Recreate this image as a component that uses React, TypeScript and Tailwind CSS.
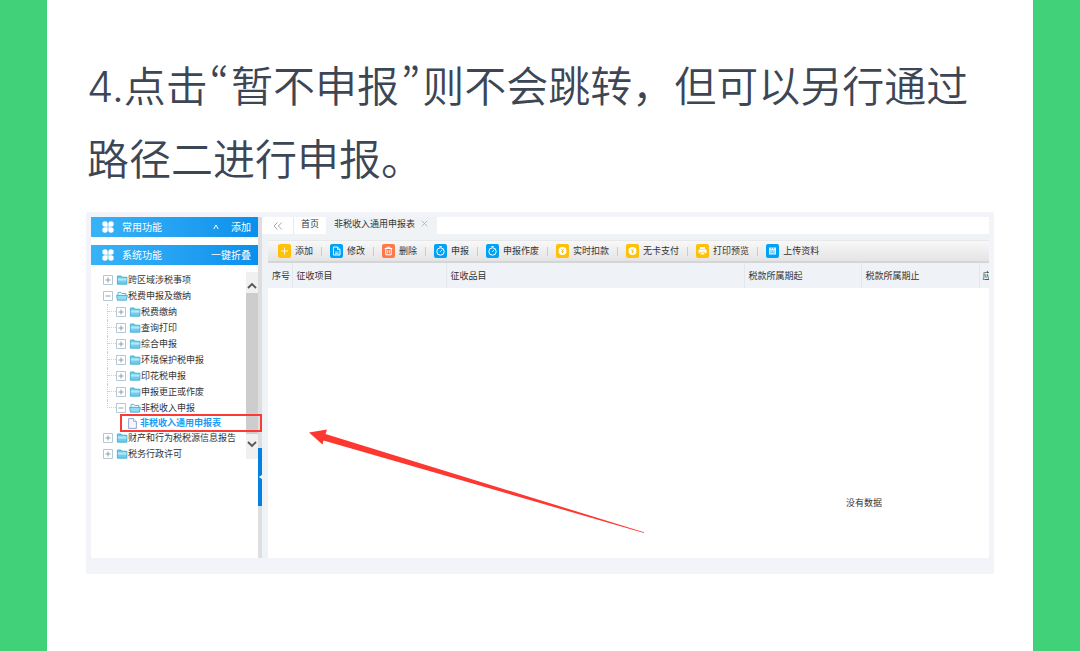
import React from "react";

type IconKind = "plus" | "edit" | "trash" | "clock" | "coin" | "printer" | "save";

function ToolGlyph({ kind }: { kind: IconKind }) {
  return (
    <svg viewBox="0 0 13 14" className="h-[14px] w-[13px]" fill="none" stroke="#fff" strokeWidth="1" aria-hidden="true">
      {kind === "plus" && <path d="M6.5 3.5v7M3 7h7" strokeOpacity="0.85" />}
      {kind === "edit" && (
        <>
          <path d="M3.5 3h4l2.5 2.5V11H3.5z" />
          <path d="M7.5 3v2.5H10M5 8h3.5M5 9.6h3.5" strokeWidth="0.8" />
        </>
      )}
      {kind === "trash" && (
        <>
          <path d="M2.8 4.5h7.4M5 4.3V3.2h3v1.1M3.8 4.8v6h5.4v-6" />
          <path d="M5.6 6.2v3M7.4 6.2v3" strokeWidth="0.8" />
        </>
      )}
      {kind === "clock" && (
        <>
          <circle cx="6.5" cy="7.5" r="3.7" />
          <path d="M6.3 7.8l1.9-2.1M5.2 2.7h2.6" />
        </>
      )}
      {kind === "coin" && (
        <>
          <circle cx="6.5" cy="7" r="4" fill="#fff" stroke="none" />
          <path d="M5.2 5l1.3 1.6L7.8 5M6.5 6.6v2.6M5.3 7.5h2.4" stroke="#ffc107" strokeWidth="0.9" />
        </>
      )}
      {kind === "printer" && (
        <>
          <path d="M4 3h5v2H4zM2.5 5.6h8v3.6h-8z" fill="#fff" stroke="none" />
          <path d="M4.3 8.2h4.4v2.6H4.3z" fill="#fff" stroke="#ffc107" strokeWidth="0.7" />
        </>
      )}
      {kind === "save" && (
        <>
          <path d="M3 3.5h7v7H3z" fill="#fff" fillOpacity="0.9" stroke="none" />
          <path d="M4.2 7h4.6M4.2 8.8h4.6M5.2 3.5v1.8M7.6 3.5v1.8" stroke="#00a2f5" strokeWidth="0.7" />
        </>
      )}
    </svg>
  );
}

const tools: { label: string; kind: IconKind; color: string }[] = [
  { label: "添加", kind: "plus", color: "bg-[#ffc107]" },
  { label: "修改", kind: "edit", color: "bg-[#00a2f5]" },
  { label: "删除", kind: "trash", color: "bg-[#ff7848]" },
  { label: "申报", kind: "clock", color: "bg-[#00a2f5]" },
  { label: "申报作废", kind: "clock", color: "bg-[#00a2f5]" },
  { label: "实时扣款", kind: "coin", color: "bg-[#ffc107]" },
  { label: "无卡支付", kind: "coin", color: "bg-[#ffc107]" },
  { label: "打印预览", kind: "printer", color: "bg-[#ffc107]" },
  { label: "上传资料", kind: "save", color: "bg-[#00a2f5]" },
];

function Folder({ open = false }: { open?: boolean }) {
  return (
    <svg viewBox="0 0 12 10" className="h-[10px] w-3 shrink-0" aria-hidden="true">
      {open ? (
        <>
          <path d="M2 5V1.4h3l.9 1.1h4V5" fill="#eefaff" stroke="#45a9cd" strokeWidth="0.8" />
          <path d="M.6 4.4h10.8l-1 4.8H1.4z" fill="#8fdcf3" stroke="#3aa3ca" strokeWidth="0.8" />
        </>
      ) : (
        <>
          <path d="M1.4 9.2V1h3.6l.9 1.2h5v7z" fill="#6ccdec" stroke="#3aa3ca" strokeWidth="0.8" />
          <path d="M1.9 3.4h8.6v2.2H1.9z" fill="#b5e9f8" />
        </>
      )}
    </svg>
  );
}

function Toggle({ open = false, label }: { open?: boolean; label: string }) {
  return (
    <button type="button" aria-label={label} aria-expanded={open} className="h-[10px] w-[10px] shrink-0">
      <svg viewBox="0 0 10 10" className="h-[10px] w-[10px]" fill="none" aria-hidden="true">
        <path d="M.5.5h9v9h-9z" stroke="#b4c8d2" fill="#fff" />
        <path d={open ? "M2.5 5h5" : "M2.5 5h5M5 2.5v5"} stroke="#8796a0" strokeWidth="0.9" />
      </svg>
    </button>
  );
}

function Branch({ label, open = false }: { label: string; open?: boolean }) {
  return (
    <div className="flex h-4 items-center">
      <Toggle open={open} label={label} />
      <span className="ml-[3px] flex items-center">
        <Folder open={open} />
        {label}
      </span>
    </div>
  );
}

const children = ["税费缴纳", "查询打印", "综合申报", "环境保护税申报", "印花税申报", "申报更正或作废"];

function BarHeader({ title, action, caret = false }: { title: string; action: string; caret?: boolean }) {
  return (
    <div className="flex h-5 items-center bg-linear-to-r from-[#38b3f8] to-[#0790ec] pr-[7px] pb-px pl-[11px] text-[10px] text-white">
      <svg viewBox="0 0 12 12" className="h-3 w-3" fill="#fff" aria-hidden="true">
        <path d="M3 0.3a2.7 2.7 0 0 1 2.7 2.7v2.7H3A2.7 2.7 0 0 1 3 .3zM9 .3a2.7 2.7 0 0 1 0 5.4H6.3V3A2.7 2.7 0 0 1 9 .3zM3 6.3h2.7V9A2.7 2.7 0 1 1 3 6.3zM6.3 6.3H9A2.7 2.7 0 1 1 6.3 9z" />
      </svg>
      <h2 className="ml-2">{title}</h2>
      <button type="button" className="ml-auto flex items-center gap-3">
        {caret && (
          <svg viewBox="0 0 6 6" className="h-[6px] w-[6px]" fill="none" stroke="#fff" aria-hidden="true">
            <path d="M0.8 5L3 1l2.2 4" />
          </svg>
        )}
        {action}
      </button>
    </div>
  );
}

function Sidebar() {
  return (
    <aside className="flex w-[167px] shrink-0 flex-col bg-white">
      <BarHeader title="常用功能" action="添加" caret />
      <div className="h-2" />
      <BarHeader title="系统功能" action="一键折叠" />
      <div className="mt-[7px] flex">
        <nav className="min-w-0 flex-1 pl-3 text-[9px] leading-4 whitespace-nowrap text-[#333]">
          <Branch label="跨区域涉税事项" />
          <Branch label="税费申报及缴纳" open />
          <ul className="ml-1">
            {children.map((name) => (
              <li key={name} className="flex">
                <span className="h-4 w-[9px] border-l border-dotted border-[#c9d1d6]">
                  <span className="block h-2 border-b border-dotted border-[#c9d1d6]" />
                </span>
                <Branch label={name} />
              </li>
            ))}
            <li className="flex">
              <span className="h-2 w-[9px] border-b border-l border-dotted border-[#c9d1d6]" />
              <Branch label="非税收入申报" open />
            </li>
            <li className="relative flex h-[14px] items-center pl-[21px]">
              <span className="absolute top-[-2px] left-[13px] h-[18px] w-[142px] border-2 border-[#fb3a35]" />
              <svg viewBox="0 0 9 11" className="h-[11px] w-[9px]" aria-hidden="true">
                <path d="M.6.6h5l2.8 2.8v7H.6z" fill="#f4f7ff" stroke="#7c8fc4" strokeWidth="0.8" />
                <path d="M5.6.6v2.8h2.8" fill="#fff" stroke="#7c8fc4" strokeWidth="0.7" />
              </svg>
              <a href="#general" className="ml-[3px] font-bold text-[#1c9cf6]">
                非税收入通用申报表
              </a>
            </li>
          </ul>
          <Branch label="财产和行为税税源信息报告" />
          <Branch label="税务行政许可" />
        </nav>
        <div className="mb-[3px] flex w-3 shrink-0 flex-col items-center bg-[#f0f0f0]">
          <svg viewBox="0 0 12 21" className="h-[21px] w-3" fill="none" stroke="#555" strokeWidth="1.8" aria-hidden="true">
            <path d="M2 16l4-4 4 4" />
          </svg>
          <div className="w-full flex-1 bg-[#cdcdcd]" />
          <svg viewBox="0 0 12 25" className="h-[25px] w-3" fill="none" stroke="#555" strokeWidth="1.8" aria-hidden="true">
            <path d="M2 8l4 4 4-4" />
          </svg>
        </div>
      </div>
    </aside>
  );
}

function Workspace() {
  return (
    <main className="relative flex min-w-0 flex-1 flex-col text-[9px] text-[#333]">
      <div className="flex h-[17px] bg-white">
        <button type="button" aria-label="收起" className="flex w-8 items-center justify-center border-r border-[#e6eaee]">
          <svg viewBox="0 0 10 8" className="h-2 w-[10px]" fill="none" stroke="#8b9299" strokeWidth="0.8" aria-hidden="true">
            <path d="M4.5 .5L1 4l3.5 3.5M8.8 .5L5.3 4l3.5 3.5" />
          </svg>
        </button>
        <button type="button" className="w-8 pb-1">首页</button>
        <div className="flex items-center gap-[6px] bg-[#eff3f6] pr-[9px] pb-1 pl-2">
          <button type="button">非税收入通用申报表</button>
          <button type="button" aria-label="关闭">
            <svg viewBox="0 0 7 7" className="h-[7px] w-[7px]" stroke="#a3a9ae" strokeWidth="0.8" aria-hidden="true">
              <path d="M.7.7l5.6 5.6M6.3.7L.7 6.3" />
            </svg>
          </button>
        </div>
      </div>
      <div className="ml-[6px] flex flex-1 flex-col pt-[6px]">
        <div className="flex h-[23px] items-center border-t border-b-2 border-t-[#e6e8ea] border-b-[#d3d5d7] bg-linear-to-b from-[#f8f8f8] to-[#e4e4e5] pl-[10px]">
          {tools.map((tool, i) => (
            <React.Fragment key={tool.label}>
              {i > 0 && <span className="mx-2 h-[9px] w-px bg-[#c9cbcd]" />}
              <button type="button" className="flex items-center gap-1 whitespace-nowrap">
                <span className={`rounded-xs ${tool.color}`}>
                  <ToolGlyph kind={tool.kind} />
                </span>
                {tool.label}
              </button>
            </React.Fragment>
          ))}
        </div>
        <table className="w-full table-fixed text-left">
          <thead>
            <tr className="h-[25px] bg-[#eff2f6] [&>th]:overflow-hidden [&>th]:border-r [&>th]:border-[#e4e8ec] [&>th]:pl-1 [&>th]:font-normal [&>th]:whitespace-nowrap [&>th:last-child]:border-r-0 [&>th:last-child]:pl-[3px]">
              <th className="w-[24px]">序号</th>
              <th className="w-[154px]">征收项目</th>
              <th className="w-[298px]">征收品目</th>
              <th className="w-[117px]">税款所属期起</th>
              <th className="w-[118px]">税款所属期止</th>
              <th>应</th>
            </tr>
          </thead>
        </table>
        <p className="flex flex-1 justify-end bg-white pt-52 pr-[107px]">没有数据</p>
      </div>
      <svg viewBox="0 0 336 106" className="absolute top-[211px] left-[46px] h-[106px] w-[336px]" aria-hidden="true">
        <path d="M1 4.5L19 1.500L17.500 6L336 104.200V105L15.500 12.500L14.500 16.500z" fill="#fd3830" />
      </svg>
    </main>
  );
}

export default function App() {
  return (
    <div className="flex min-h-screen bg-white font-['Noto_Sans_CJK_SC',sans-serif]">
      <div className="w-[47px] shrink-0 bg-[#41d179]" />
      <div className="min-w-0 flex-1 px-[39px] pt-[50px]">
        <h1
          lang="zh-CN"
          className="pl-px font-['Inter','Noto_Sans_CJK_SC',sans-serif] text-[42px] leading-[73px] font-[350] text-[#3c4654]"
        >
          4.点击
          <span lang="ko" className="px-0.5 font-['Noto_Sans_CJK_KR',sans-serif] leading-none">“</span>
          暂不申报
          <span lang="ko" className="px-0.5 font-['Noto_Sans_CJK_KR',sans-serif] leading-none">”</span>
          则不会跳转，但可以另行通过路径二进行申报。
        </h1>
        <section className="mt-4 rounded-xs bg-[#f2f4f9] px-[5px] pt-[5px] pb-4">
          <div className="flex h-[341px] bg-[#eff3f6]">
            <Sidebar />
            <button type="button" aria-label="收起侧栏" className="flex w-1 shrink-0 flex-col bg-[#dddee1] pt-[231px]">
              <span className="flex h-[58px] w-1 items-center bg-[#0380e0]">
                <svg viewBox="0 0 4 6" className="h-[6px] w-1" fill="#fff" aria-hidden="true">
                  <path d="M4 1v4L.8 3z" />
                </svg>
              </span>
            </button>
            <Workspace />
          </div>
        </section>
      </div>
      <div className="w-[47px] shrink-0 bg-[#41d179]" />
    </div>
  );
}
